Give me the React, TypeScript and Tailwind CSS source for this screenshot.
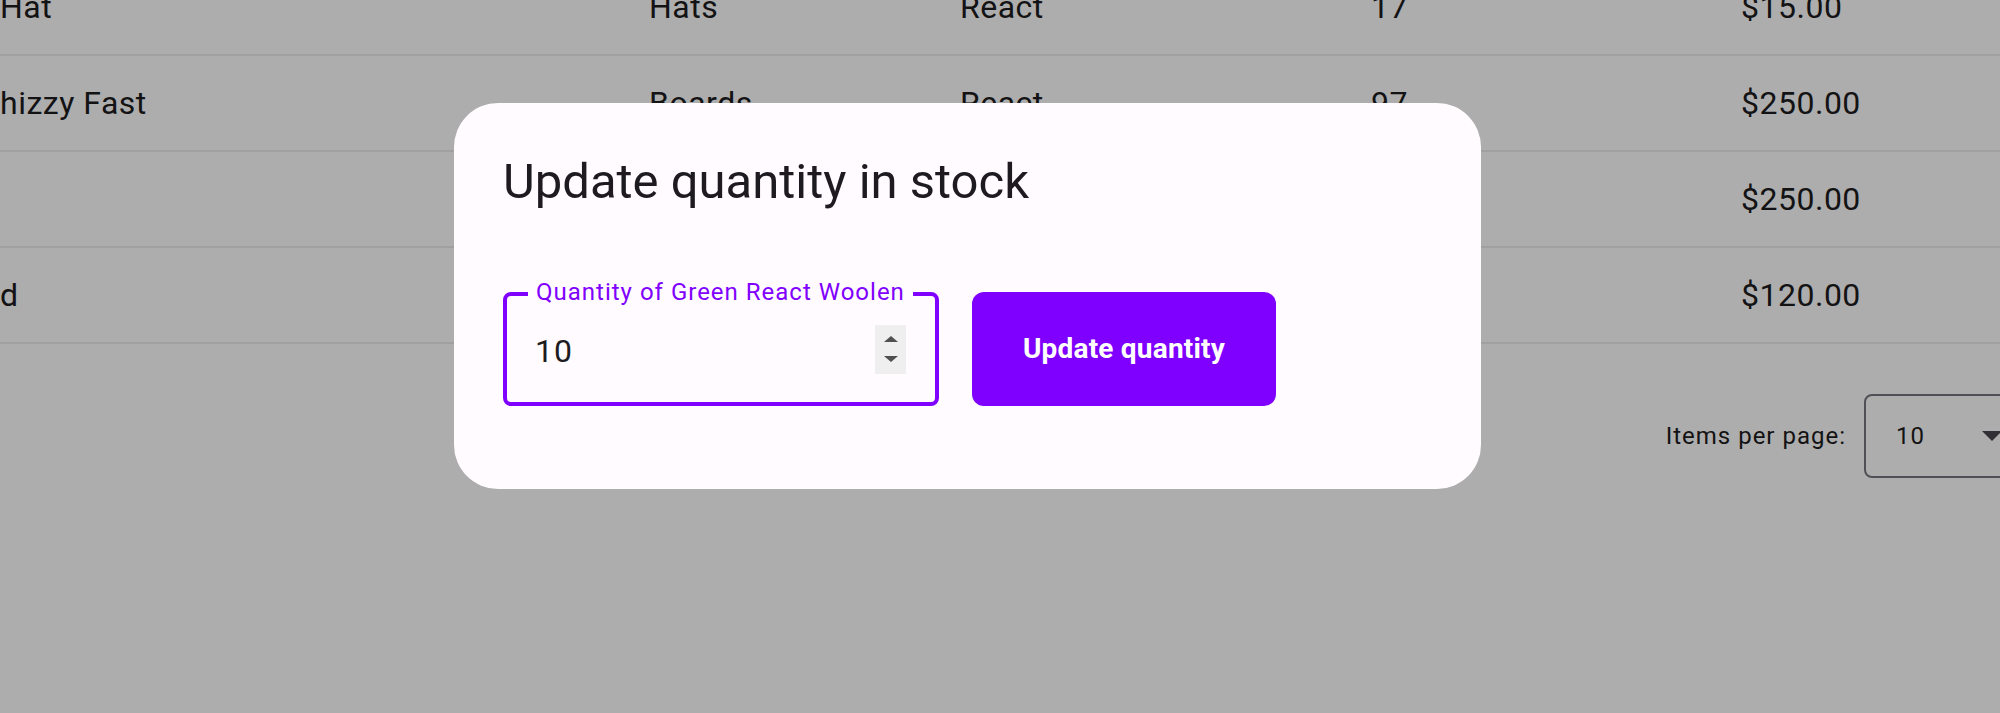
import React from 'react';

const rows = [
  ['Hat', 'Hats', 'React', '17', '$15.00'],
  ['hizzy Fast', 'Boards', 'React', '97', '$250.00'],
  ['', 'Boards', 'React', '12', '$250.00'],
  ['d', 'Boards', 'React', '40', '$120.00'],
];

function Triangle({ down }: { down?: boolean }) {
  return (
    <span
      className={
        down
          ? 'block h-0 w-0 border-x-[7px] border-t-[6px] border-x-transparent border-t-[#505050]'
          : 'block h-0 w-0 border-x-[7px] border-b-[6px] border-x-transparent border-b-[#505050]'
      }
    />
  );
}

export default function App() {
  return (
    <div className="relative h-[713px] w-[2000px] overflow-hidden bg-white font-['Roboto',sans-serif] text-[#1d1b20]">
      <div className="-mt-[40px]">
        {rows.map((row, i) => (
          <div
            key={i}
            className="grid h-[96px] grid-cols-[649px_311px_411px_370px_1fr] items-center border-b-2 border-[#ececec] text-[32px] leading-[48px] tracking-[0.5px]"
          >
            {row.map((cell, j) => (
              <div key={j} className="whitespace-nowrap">
                {cell}
              </div>
            ))}
          </div>
        ))}
      </div>

      <div className="-mr-[32px] mt-[50px] flex items-center justify-end gap-[18px]">
        <span className="text-[24px] leading-[32px] tracking-[1px]">Items per page:</span>
        <div className="flex h-[84px] w-[168px] items-center rounded-[8px] border-2 border-[#79747e] pl-[30px] pr-[28px]">
          <span className="flex-1 text-[24px] leading-[32px] tracking-[1px]">10</span>
          <span className="block h-0 w-0 border-x-[10px] border-t-[10px] border-x-transparent border-t-[#49454f]" />
        </div>
      </div>

      <div className="absolute inset-0 bg-black/[0.32]" />

      <div className="absolute left-[454px] top-[103px] w-[1027px] rounded-[44px] bg-[#fffbfe] pl-[49px] pt-[47px] pb-[83px]">
        <h2 className="text-[49px] font-normal leading-[64px] text-[#1d1b20]">Update quantity in stock</h2>
        <div className="mt-[78px] flex gap-[33px]">
          <div className="relative flex h-[114px] w-[436px] items-center rounded-[8px] border-4 border-[#7f00ff] pl-[28px] pr-[29px]">
            <span className="absolute -top-[20px] left-[21px] bg-[#fffbfe] px-[8px] text-[24px] leading-[32px] tracking-[1px] text-[#7f00ff]">
              Quantity of Green React Woolen
            </span>
            <span className="flex-1 pt-[4px] text-[32px] leading-[48px] tracking-[1px] text-[#1d1b20]">10</span>
            <div className="flex h-[49px] w-[31px] flex-col items-center justify-center gap-[14px] bg-[#efefef]">
              <Triangle />
              <Triangle down />
            </div>
          </div>
          <button className="flex h-[114px] w-[304px] items-center justify-center rounded-[12px] bg-[#7f00ff] text-[28px] font-bold tracking-[0.2px] text-white">
            Update quantity
          </button>
        </div>
      </div>
    </div>
  );
}
